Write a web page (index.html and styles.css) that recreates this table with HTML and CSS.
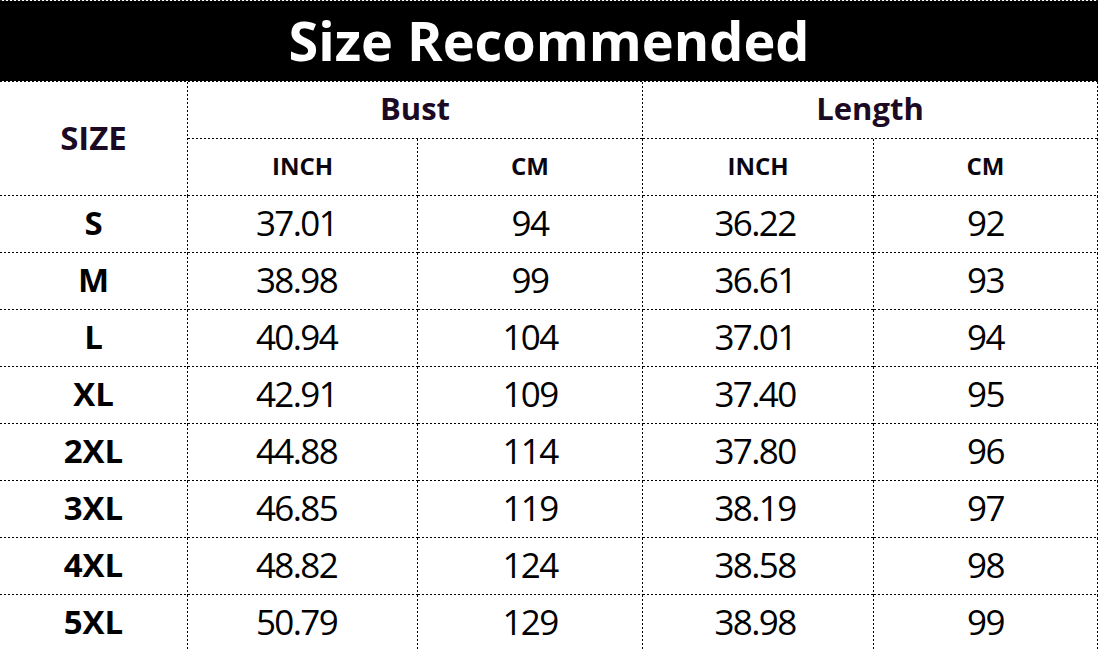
FILE: index.html
```html
<!DOCTYPE html>
<html lang="en">
<head>
<meta charset="utf-8">
<title>Size Recommended</title>
<link rel="stylesheet" href="styles.css">
</head>
<body>
<div class="sheet">
  <div class="title">Size Recommended</div>
  <div class="cell head size-head">SIZE</div>
  <div class="cell head group">Bust</div>
  <div class="cell head group">Length</div>
  <div class="cell sub">INCH</div>
  <div class="cell sub">CM</div>
  <div class="cell sub">INCH</div>
  <div class="cell sub">CM</div>

  <div class="cell label">S</div><div class="cell num">37.01</div><div class="cell num">94</div><div class="cell num">36.22</div><div class="cell num">92</div>
  <div class="cell label">M</div><div class="cell num">38.98</div><div class="cell num">99</div><div class="cell num">36.61</div><div class="cell num">93</div>
  <div class="cell label">L</div><div class="cell num">40.94</div><div class="cell num">104</div><div class="cell num">37.01</div><div class="cell num">94</div>
  <div class="cell label">XL</div><div class="cell num">42.91</div><div class="cell num">109</div><div class="cell num">37.40</div><div class="cell num">95</div>
  <div class="cell label">2XL</div><div class="cell num">44.88</div><div class="cell num">114</div><div class="cell num">37.80</div><div class="cell num">96</div>
  <div class="cell label">3XL</div><div class="cell num">46.85</div><div class="cell num">119</div><div class="cell num">38.19</div><div class="cell num">97</div>
  <div class="cell label">4XL</div><div class="cell num">48.82</div><div class="cell num">124</div><div class="cell num">38.58</div><div class="cell num">98</div>
  <div class="cell label">5XL</div><div class="cell num">50.79</div><div class="cell num">129</div><div class="cell num">38.98</div><div class="cell num">99</div>
</div>
</body>
</html>
```

FILE: styles.css
```css
html, body {
  margin: 0;
  padding: 0;
  background: #fff;
}

body {
  font-family: "Open Sans", "Noto Sans", "Liberation Sans", sans-serif;
  color: #000;
  overflow: hidden;
}

.sheet {
  width: 1098px;
  display: grid;
  grid-template-columns: 188px 230px 225px 231px 224px;
  grid-template-rows: 81px 57px 57px repeat(8, 57px);
  padding-top: 1px;
  background:
    repeating-linear-gradient(90deg, #222 0 2px, transparent 2px 4px) left top / 100% 1px no-repeat,
    #fff;
}

.title {
  grid-column: 1 / 6;
  color: #fff;
  font-weight: 700;
  font-size: 54px;
  display: flex;
  align-items: center;
  justify-content: center;
  border-bottom: 1px solid transparent;
  box-sizing: border-box;
  padding-bottom: 2px;
  background:
    repeating-linear-gradient(90deg, #000 0 2px, transparent 2px 4px) left bottom / 100% 1px no-repeat border-box,
    linear-gradient(#000, #000) padding-box,
    #fff;
}

.cell {
  display: flex;
  align-items: center;
  justify-content: center;
  box-sizing: border-box;
  padding: 0 1px 4px 0;
  background:
    repeating-linear-gradient(90deg, #000 0 2px, transparent 2px 4px) left bottom / 100% 1px no-repeat,
    repeating-linear-gradient(180deg, #000 0 2px, transparent 2px 4px) right top / 1px 100% no-repeat;
}

.head {
  font-weight: 700;
  color: #1c0a24;
  font-size: 31px;
}

.size-head {
  grid-row: 2 / 4;
  font-size: 33px;
}

.group {
  grid-column: span 2;
  padding-bottom: 6px;
}

.sub {
  font-weight: 700;
  font-size: 24px;
  color: #0c0610;
}

.label {
  font-weight: 700;
  font-size: 33px;
}

.num {
  font-size: 35px;
  letter-spacing: -1.6px;
}

/* Bust INCH column */
.num:nth-child(5n+10) {
  padding-right: 13px;
}

/* Length INCH column */
.num:nth-child(5n+12) {
  padding-right: 7px;
}
```
